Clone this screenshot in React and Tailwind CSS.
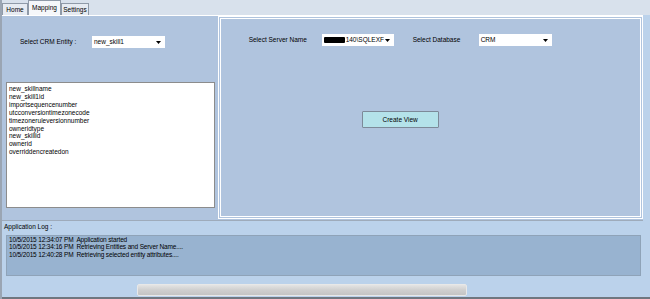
import React from 'react';

const fields = [
  'new_skillname',
  'new_skill1id',
  'importsequencenumber',
  'utcconversiontimezonecode',
  'timezoneruleversionnumber',
  'owneridtype',
  'new_skillid',
  'ownerid',
  'overriddencreatedon',
];

const logLines = [
  ['10/5/2015 12:34:07 PM', 'Application started'],
  ['10/5/2015 12:34:16 PM', 'Retrieving Entities and Server Name....'],
  ['10/5/2015 12:40:28 PM', 'Retrieving selected entity attributes....'],
];

function Caret() {
  return (
    <svg width="5" height="3" viewBox="0 0 5 3" className="shrink-0">
      <path d="M0 0h5L2.5 3z" fill="#000" />
    </svg>
  );
}

function Combo({ width, children }) {
  return (
    <div
      className={`flex h-[12px] items-center justify-between bg-white pl-[2px] pr-[4px] ${width}`}
    >
      <span className="flex items-center whitespace-nowrap leading-none">{children}</span>
      <Caret />
    </div>
  );
}

export default function App() {
  return (
    <div
      className="flex h-[299px] w-[650px] flex-col overflow-hidden border-l-2 border-[#9aa5b3] bg-[#bbd2eb] text-[6.5px] text-black"
      style={{ fontFamily: '"Liberation Sans", Arial, sans-serif' }}
    >
      {/* tab strip */}
      <div className="flex h-[15px] shrink-0 items-end bg-[#d8e1ec]">
        <div className="flex h-[12px] w-[26px] items-center justify-center border border-b-0 border-[#8f9aa8] bg-[#e6ebf2]">
          Home
        </div>
        <div className="flex h-[15px] w-[33px] items-center justify-center border border-b-0 border-[#8f9aa8] bg-[#f5f7fa]">
          Mapping
        </div>
        <div className="flex h-[12px] w-[28px] items-center justify-center border border-b-0 border-[#8f9aa8] bg-[#e6ebf2]">
          Settings
        </div>
      </div>

      {/* tab page */}
      <div className="flex h-[206px] w-[641px] shrink-0 border-b border-t border-b-[#9eabbb] border-t-white bg-[#b0c4de]">
        <div className="flex w-[215px] flex-col">
          <div className="mt-[20px] flex items-center pl-[18px]">
            <span className="w-[72px]">Select CRM Entity :</span>
            <Combo width="w-[73px]">new_skill1</Combo>
          </div>
          <div className="ml-[4px] mt-[34px] h-[126px] w-[209px] border border-[#8c8c8c] bg-white pl-[2px] pt-[2px] leading-[7.9px]">
            {fields.map((f) => (
              <div key={f}>{f}</div>
            ))}
          </div>
        </div>
        <div className="ml-[1px] flex h-[203px] w-[426px] flex-col border border-white pl-[30px] pt-[17px] shadow-[inset_0_0_0_1px_#b0c4de,inset_0_0_0_2px_#ffffff]">
          <div className="flex items-center">
            <span className="w-[73px]">Select Server Name</span>
            <Combo width="w-[72px]">
              <span className="mr-[1px] inline-block h-[6px] w-[21px] rounded-[1px] bg-black" />
              140\SQLEXF
            </Combo>
            <span className="ml-[19px] w-[66px]">Select Database</span>
            <Combo width="w-[73px]">CRM</Combo>
          </div>
          <div className="ml-[113px] mt-[65px] flex h-[17px] w-[77px] items-center justify-center rounded-[1px] border border-[#7d8a99] bg-[#b4e2ea]">
            Create View
          </div>
        </div>
      </div>

      {/* log */}
      <div className="ml-[2px] mt-[3px] leading-none">Application Log :</div>
      <div className="ml-[4px] mt-[4px] h-[41px] w-[635px] border border-[#8fa3b8] bg-[#98b3d0] pl-[2px] leading-[7.8px] tracking-[-0.15px]">
        {logLines.map(([t, m]) => (
          <div key={t} className="flex whitespace-nowrap">
            <span className="mr-[3px] shrink-0">{t}</span>
            <span>{m}</span>
          </div>
        ))}
      </div>
      <div className="ml-[135px] mt-[8px] h-[12px] w-[330px] rounded-[2px] border border-[#e8e8e8] bg-gradient-to-b from-[#e4e4e4] via-[#cfcfcf] to-[#c4c4c4]" />
      <div className="mt-auto h-[2px] w-full bg-[#6f7780]" />
    </div>
  );
}
